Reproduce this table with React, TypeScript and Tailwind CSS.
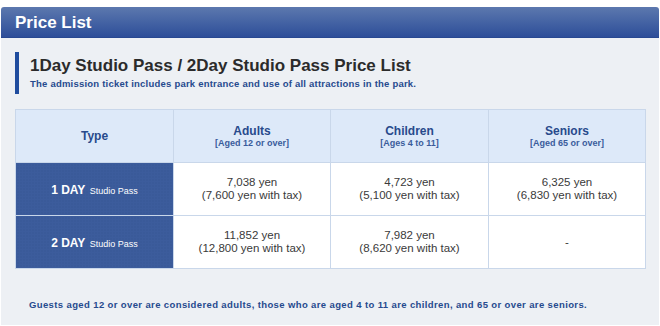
import React from 'react';

type Row = {
  days: string;
  adults: [string, string] | null;
  children: [string, string] | null;
  seniors: [string, string] | null;
};

const rows: Row[] = [
  {
    days: '1 DAY',
    adults: ['7,038 yen', '(7,600 yen with tax)'],
    children: ['4,723 yen', '(5,100 yen with tax)'],
    seniors: ['6,325 yen', '(6,830 yen with tax)'],
  },
  {
    days: '2 DAY',
    adults: ['11,852 yen', '(12,800 yen with tax)'],
    children: ['7,982 yen', '(8,620 yen with tax)'],
    seniors: null,
  },
];

const columns = [
  { label: 'Adults', note: '[Aged 12 or over]' },
  { label: 'Children', note: '[Ages 4 to 11]' },
  { label: 'Seniors', note: '[Aged 65 or over]' },
];

function PriceCell({ value }: { value: [string, string] | null }) {
  return (
    <td className="border border-[#c9d7ea] bg-white text-center align-middle text-[11.5px] leading-[13px] text-[#3a3a3a]">
      {value ? (
        <>
          <div>{value[0]}</div>
          <div>{value[1]}</div>
        </>
      ) : (
        <div>-</div>
      )}
    </td>
  );
}

export default function App() {
  return (
    <div className="w-[660px] h-[326px] bg-white pt-[7px] font-['Liberation_Sans',Arial,sans-serif]">
      <div className="mx-[1px]">
        {/* title bar */}
        <div className="h-[31px] rounded-t-[3px] border-b border-[#284891] bg-gradient-to-b from-[#5c78ae] to-[#2e4e99] px-[14px] flex items-center">
          <h2 className="text-[17px] font-bold text-white leading-none">Price List</h2>
        </div>

        {/* panel */}
        <div className="h-[287px] bg-[#edf0f4] px-[14px] pt-[14px]">
          <div className="border-l-[4px] border-[#1f4c9e] pl-[11px] h-[42px] flex flex-col justify-center">
            <h3 className="text-[17px] font-bold text-[#2b2b2b] leading-[22px]">
              1Day Studio Pass / 2Day Studio Pass Price List
            </h3>
            <p className="text-[9.5px] font-bold text-[#264a8e] leading-[14px] tracking-[0.22px]">
              The admission ticket includes park entrance and use of all attractions in the park.
            </p>
          </div>

          <table className="mt-[15px] w-[630px] border-collapse table-fixed">
            <colgroup>
              <col className="w-[158px]" />
              <col className="w-[157px]" />
              <col className="w-[158px]" />
              <col className="w-[157px]" />
            </colgroup>
            <thead>
              <tr className="h-[53px]">
                <th className="border border-[#c9d7ea] bg-[#dde9f9] text-[12px] font-bold text-[#284a8c]">
                  Type
                </th>
                {columns.map((c) => (
                  <th
                    key={c.label}
                    className="border border-[#c9d7ea] bg-[#dde9f9] text-center align-middle text-[#284a8c]"
                  >
                    <div className="text-[12px] font-bold leading-[14px]">{c.label}</div>
                    <div className="text-[9px] font-bold leading-[11px] text-[#3a5c9c]">{c.note}</div>
                  </th>
                ))}
              </tr>
            </thead>
            <tbody>
              {rows.map((r) => (
                <tr key={r.days} className="h-[53px]">
                  <td className="border border-[#c9d7ea] bg-[#3c5c9c] bg-[radial-gradient(#33528f_0.7px,transparent_0.9px)] bg-[length:3px_3px] text-center text-white">
                    <span className="text-[12px] font-bold">{r.days}</span>{' '}
                    <span className="text-[9px]">Studio Pass</span>
                  </td>
                  <PriceCell value={r.adults} />
                  <PriceCell value={r.children} />
                  <PriceCell value={r.seniors} />
                </tr>
              ))}
            </tbody>
          </table>

          <p className="mt-[29px] pl-[14px] text-[9.5px] font-bold text-[#264a8e] tracking-[0.38px]">
            Guests aged 12 or over are considered adults, those who are aged 4 to 11 are children, and 65 or over are seniors.
          </p>
        </div>
      </div>
    </div>
  );
}
